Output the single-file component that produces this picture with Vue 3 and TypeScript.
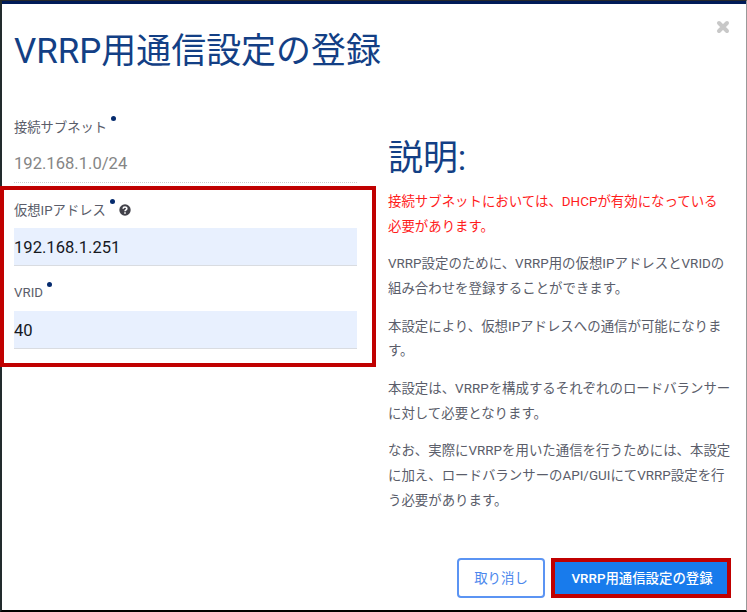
<script setup lang="ts">
interface Paragraph {
  lines: string[]
  warning?: boolean
}

const title = 'VRRP用通信設定の登録'

const paragraphs: Paragraph[] = [
  { lines: ['接続サブネットにおいては、DHCPが有効になっている', '必要があります。'], warning: true },
  { lines: ['VRRP設定のために、VRRP用の仮想IPアドレスとVRIDの', '組み合わせを登録することができます。'] },
  { lines: ['本設定により、仮想IPアドレスへの通信が可能になりま', 'す。'] },
  { lines: ['本設定は、VRRPを構成するそれぞれのロードバランサー', 'に対して必要となります。'] },
  { lines: ['なお、実際にVRRPを用いた通信を行うためには、本設定', 'に加え、ロードバランサーのAPI/GUIにてVRRP設定を行', 'う必要があります。'] },
]
</script>

<template>
  <div class="modal">
    <header class="header">
      <h1>{{ title }}</h1>
      <button class="close" aria-label="閉じる">
        <svg viewBox="0 0 14 14" width="14" height="14"><path d="M3 3 11 11M11 3 3 11" /></svg>
      </button>
    </header>

    <main class="body">
      <form class="form">
        <div class="field">
          <label>接続サブネット<i class="dot"></i></label>
          <div class="value fixed">192.168.1.0/24</div>
        </div>
        <div class="field">
          <label>仮想IPアドレス<i class="dot"></i>
            <svg class="help" viewBox="0 0 12 12" width="12" height="12">
              <circle cx="6" cy="6" r="5.7" />
              <path d="M4.1 4.7C4.2 2.4 7.9 2.6 7.8 4.6 7.7 5.8 6 5.8 6 7.2M6 8.3V9.7" />
            </svg>
          </label>
          <div class="value">192.168.1.251</div>
        </div>
        <div class="field">
          <label>VRID<i class="dot"></i></label>
          <div class="value">40</div>
        </div>
        <div class="highlight"></div>
      </form>

      <section class="description">
        <h2>説明:</h2>
        <p v-for="(p, i) in paragraphs" :key="i" :class="{ warning: p.warning }">
          <span v-for="line in p.lines" :key="line">{{ line }}</span>
        </p>
      </section>
    </main>

    <footer class="footer">
      <button class="cancel">取り消し</button>
      <button class="submit">{{ title }}</button>
    </footer>
  </div>
</template>

<style>
body {
  background: #fff;
}
</style>

<style scoped>
* {
  box-sizing: border-box;
}
.modal {
  position: relative;
  display: flex;
  flex-direction: column;
  width: 747px;
  height: 612px;
  border: solid #000;
  border-width: 1px 1px 2px 2px;
  border-left-color: #222b2d;
  border-right-color: #999;
  border-top-color: #26292b;
  background: #fff;
  font-family: Roboto, "Noto Sans CJK JP", sans-serif;
  color: #5a5d6a;
}
.header {
  display: flex;
  justify-content: space-between;
  height: 106px;
  flex: none;
  padding: 25px 16px 0 12px;
  border-top: 3px solid #001b58;
}
h1,
h2 {
  margin: 0;
  font-size: 34.95px;
  line-height: 46px;
  font-weight: 400;
  color: #133f85;
  white-space: nowrap;
}
button {
  font-family: inherit;
  padding: 0;
}
.close {
  height: 14px;
  margin-top: -9px;
  border: 0;
  background: none;
  line-height: 0;
}
.close path {
  stroke: #c8c8c8;
  stroke-width: 4;
  stroke-linecap: round;
}
.body {
  display: flex;
  gap: 31px;
  flex: none;
  height: 451px;
  padding-left: 12px;
}
.form {
  width: 343px;
}
.field {
  height: 83px;
}
label {
  display: flex;
  align-items: center;
  height: 38px;
  font-size: 13.3px;
}
.dot {
  width: 5px;
  height: 5px;
  margin: -16px 0 0 4px;
  border-radius: 50%;
  background: #052b6e;
}
.help {
  margin: 2px 0 0 4px;
}
.help circle {
  fill: #42424a;
}
.help path {
  fill: none;
  stroke: #fff;
  stroke-width: 1.6;
}
.value {
  height: 38px;
  border-bottom: 1px solid #d9dce1;
  background: #e8f0fe;
  color: #16191f;
  font-size: 16.6px;
  line-height: 39px;
}
.fixed {
  border-bottom: 1px dotted #ccc;
  background: none;
  color: #858585;
  line-height: 37px;
}
.highlight {
  position: absolute;
  left: -2px;
  top: 185px;
  width: 376px;
  height: 181px;
  border: 4px solid #c00000;
}
.description {
  padding-top: 29px;
}
h2 {
  margin-bottom: 8px;
}
p {
  margin: 0 0 12.9px;
  font-size: 13.43px;
  line-height: 24.7px;
}
p span {
  display: block;
  white-space: nowrap;
}
.warning {
  color: #ff1c1c;
}
.footer {
  display: flex;
  justify-content: flex-end;
  gap: 6px;
  padding-right: 15px;
}
.cancel,
.submit {
  height: 40px;
  padding-bottom: 3px;
  font-size: 13.4px;
}
.cancel {
  width: 88px;
  border: 2px solid #5b94f3;
  border-radius: 4px;
  background: #fff;
  color: #4b87ed;
}
.submit {
  width: 180px;
  padding-left: 2px;
  border: 4px solid #c00000;
  background: #187bec;
  color: #fff;
  font-weight: 500;
}
</style>
